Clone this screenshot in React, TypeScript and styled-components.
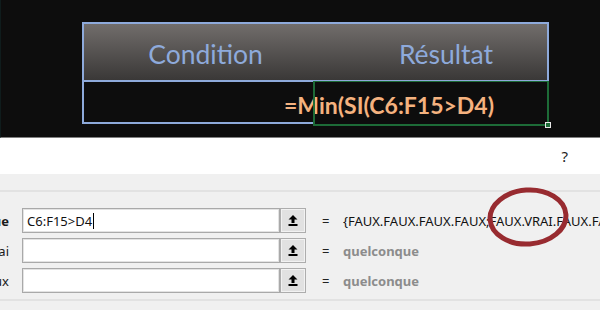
import React from 'react';
import styled, { createGlobalStyle } from 'styled-components';

type ArgRow = {
  label: string;
  value: string;
  active?: boolean;
  result: string;
  empty?: boolean;
};

const rows: ArgRow[] = [
  { label: 'Test_logique', value: 'C6:F15>D4', active: true, result: '{FAUX.FAUX.FAUX.FAUX;FAUX.VRAI.FAUX.FAUX.FAUX.FAUX' },
  { label: 'Valeur_si_vrai', value: '', result: 'quelconque', empty: true },
  { label: 'Valeur_si_faux', value: '', result: 'quelconque', empty: true },
];

const GlobalStyle = createGlobalStyle`
  html, body {
    margin: 0;
    padding: 0;
    background: #f0f0f0;
  }
  body {
    width: 600px;
    height: 310px;
    overflow: hidden;
  }
`;

const UploadIcon = () => (
  <svg width="10" height="11" viewBox="0 0 10 11">
    <path d="M5 0 L9.5 4.6 L6.5 4.6 L6.5 8 L3.5 8 L3.5 4.6 L0.5 4.6 Z" fill="#000" />
    <rect x="0.5" y="9" width="9" height="2" fill="#000" />
  </svg>
);

const App = () => {
  return (
    <Page>
      <GlobalStyle />
      <Sheet>
        <Table>
          <Header>
            <HeadCell shift={12}>Condition</HeadCell>
            <HeadCell shift={30}>Résultat</HeadCell>
          </Header>
          <Body>
            <LeftCell />
            <ActiveCell>
              <Handle />
            </ActiveCell>
            <Formula>=Min(SI(C6:F15&gt;D4)</Formula>
          </Body>
        </Table>
      </Sheet>
      <TitleBar>
        <Help>?</Help>
      </TitleBar>
      <Dialog>
        <Divider />
        <Args>
          {rows.map(r => (
            <Row key={r.label}>
              <Label active={!!r.active}>
                <span>{r.label}</span>
              </Label>
              <Field>
                {r.value}
                {r.active && <Caret />}
              </Field>
              <PickButton>
                <UploadIcon />
              </PickButton>
              <Equals>=</Equals>
              <Result empty={!!r.empty}>{r.result}</Result>
            </Row>
          ))}
        </Args>
        <Divider />
        <Mark viewBox="0 0 84 62">
          <ellipse cx="42" cy="31" rx="38" ry="27" fill="none" stroke="#982b30" strokeWidth="5" />
        </Mark>
      </Dialog>
    </Page>
  );
};

const Page = styled.div`
  width: 600px;
  height: 310px;
  display: flex;
  flex-direction: column;
  font-family: 'Noto Sans', 'Open Sans', sans-serif;
`;

const Sheet = styled.div`
  height: 138px;
  box-sizing: border-box;
  background: #0d0d0d;
  border-left: 1px solid #0f1c1c;
  border-bottom: 1px solid #7f7f7f;
  padding: 22px 0 0 81px;
`;

const Table = styled.div`
  width: 467px;
  display: flex;
  flex-direction: column;
`;

const Header = styled.div`
  height: 60px;
  box-sizing: border-box;
  display: grid;
  grid-template-columns: 231px 1fr;
  align-items: center;
  border: 2px solid #8eaadb;
  background: linear-gradient(#716d6b, #3a3837);
`;

const HeadCell = styled.div<{ shift?: number }>`
  text-align: center;
  padding-left: ${props => props.shift || 0}px;
  padding-top: 3px;
  font-family: Lato, 'Open Sans', sans-serif;
  font-size: 26.5px;
  color: #8eaadb;
`;

const Body = styled.div`
  height: 45px;
  display: grid;
  grid-template-columns: 231px 1fr;
  margin-top: -1px;
`;

const LeftCell = styled.div`
  grid-column: 1;
  grid-row: 1;
  border-left: 2px solid #8eaadb;
  border-bottom: 2px solid #8eaadb;
  margin-bottom: 2px;
`;

const ActiveCell = styled.div`
  grid-column: 2;
  grid-row: 1;
  position: relative;
  border: 2px solid #1d6b37;
  border-top-width: 1px;
`;

const Handle = styled.div`
  position: absolute;
  right: -4px;
  bottom: -4px;
  width: 4px;
  height: 4px;
  background: #1d6b37;
  border: 1px solid #e8e8e8;
`;

const Formula = styled.div`
  grid-column: 1 / -1;
  grid-row: 1;
  align-self: center;
  padding-left: 202px;
  padding-top: 2px;
  font-family: Lato, 'Open Sans', sans-serif;
  font-weight: 700;
  font-size: 23px;
  color: #f5b27f;
`;

const TitleBar = styled.div`
  height: 36px;
  background: #ffffff;
  display: flex;
  justify-content: flex-end;
  align-items: center;
  padding-right: 32px;
`;

const Help = styled.span`
  font-size: 15px;
  color: #1e1e1e;
`;

const Dialog = styled.div`
  position: relative;
  flex: 1;
  padding-top: 16px;
  background: #f0f0f0;
  overflow: hidden;
`;

const Divider = styled.div`
  height: 2px;
  background: #e2e2e2;
`;

const Args = styled.div`
  display: flex;
  flex-direction: column;
  gap: 5px;
  padding: 16px 0 6px;
`;

const Row = styled.div`
  display: grid;
  grid-template-columns: 9px 271px 26px 37px 1fr;
  align-items: center;
  height: 25px;
  font-size: 13px;
`;

const Label = styled.div<{ active: boolean }>`
  display: flex;
  justify-content: flex-end;
  overflow: hidden;
  white-space: nowrap;
  font-weight: ${props => (props.active ? 700 : 400)};
  color: #1a1a1a;
  & > span {
    flex-shrink: 0;
  }
`;

const Field = styled.div`
  margin-left: 13px;
  height: 25px;
  box-sizing: border-box;
  border: 1px solid #a9a9a9;
  box-shadow: inset 0 0 0 1px #e3e3e3;
  background: #ffffff;
  display: flex;
  align-items: center;
  padding-left: 4px;
  font-size: 13px;
  color: #111;
`;

const Caret = styled.span`
  display: inline-block;
  width: 1px;
  height: 16px;
  background: #000;
  margin-left: 1px;
`;

const PickButton = styled.div`
  height: 25px;
  box-sizing: border-box;
  border: 1px solid #adadad;
  box-shadow: inset 0 0 0 1px #f2f2f2;
  background: #e1e1e1;
  display: flex;
  align-items: center;
  justify-content: center;
`;

const Equals = styled.div`
  padding-left: 16px;
  color: #222;
`;

const Result = styled.div<{ empty: boolean }>`
  white-space: nowrap;
  overflow: hidden;
  color: ${props => (props.empty ? '#8c8c8c' : '#111')};
  font-weight: ${props => (props.empty ? 700 : 400)};
`;

const Mark = styled.svg`
  position: absolute;
  left: 486px;
  top: 12px;
  width: 84px;
  height: 62px;
  transform: rotate(-4deg);
`;

export default App;
